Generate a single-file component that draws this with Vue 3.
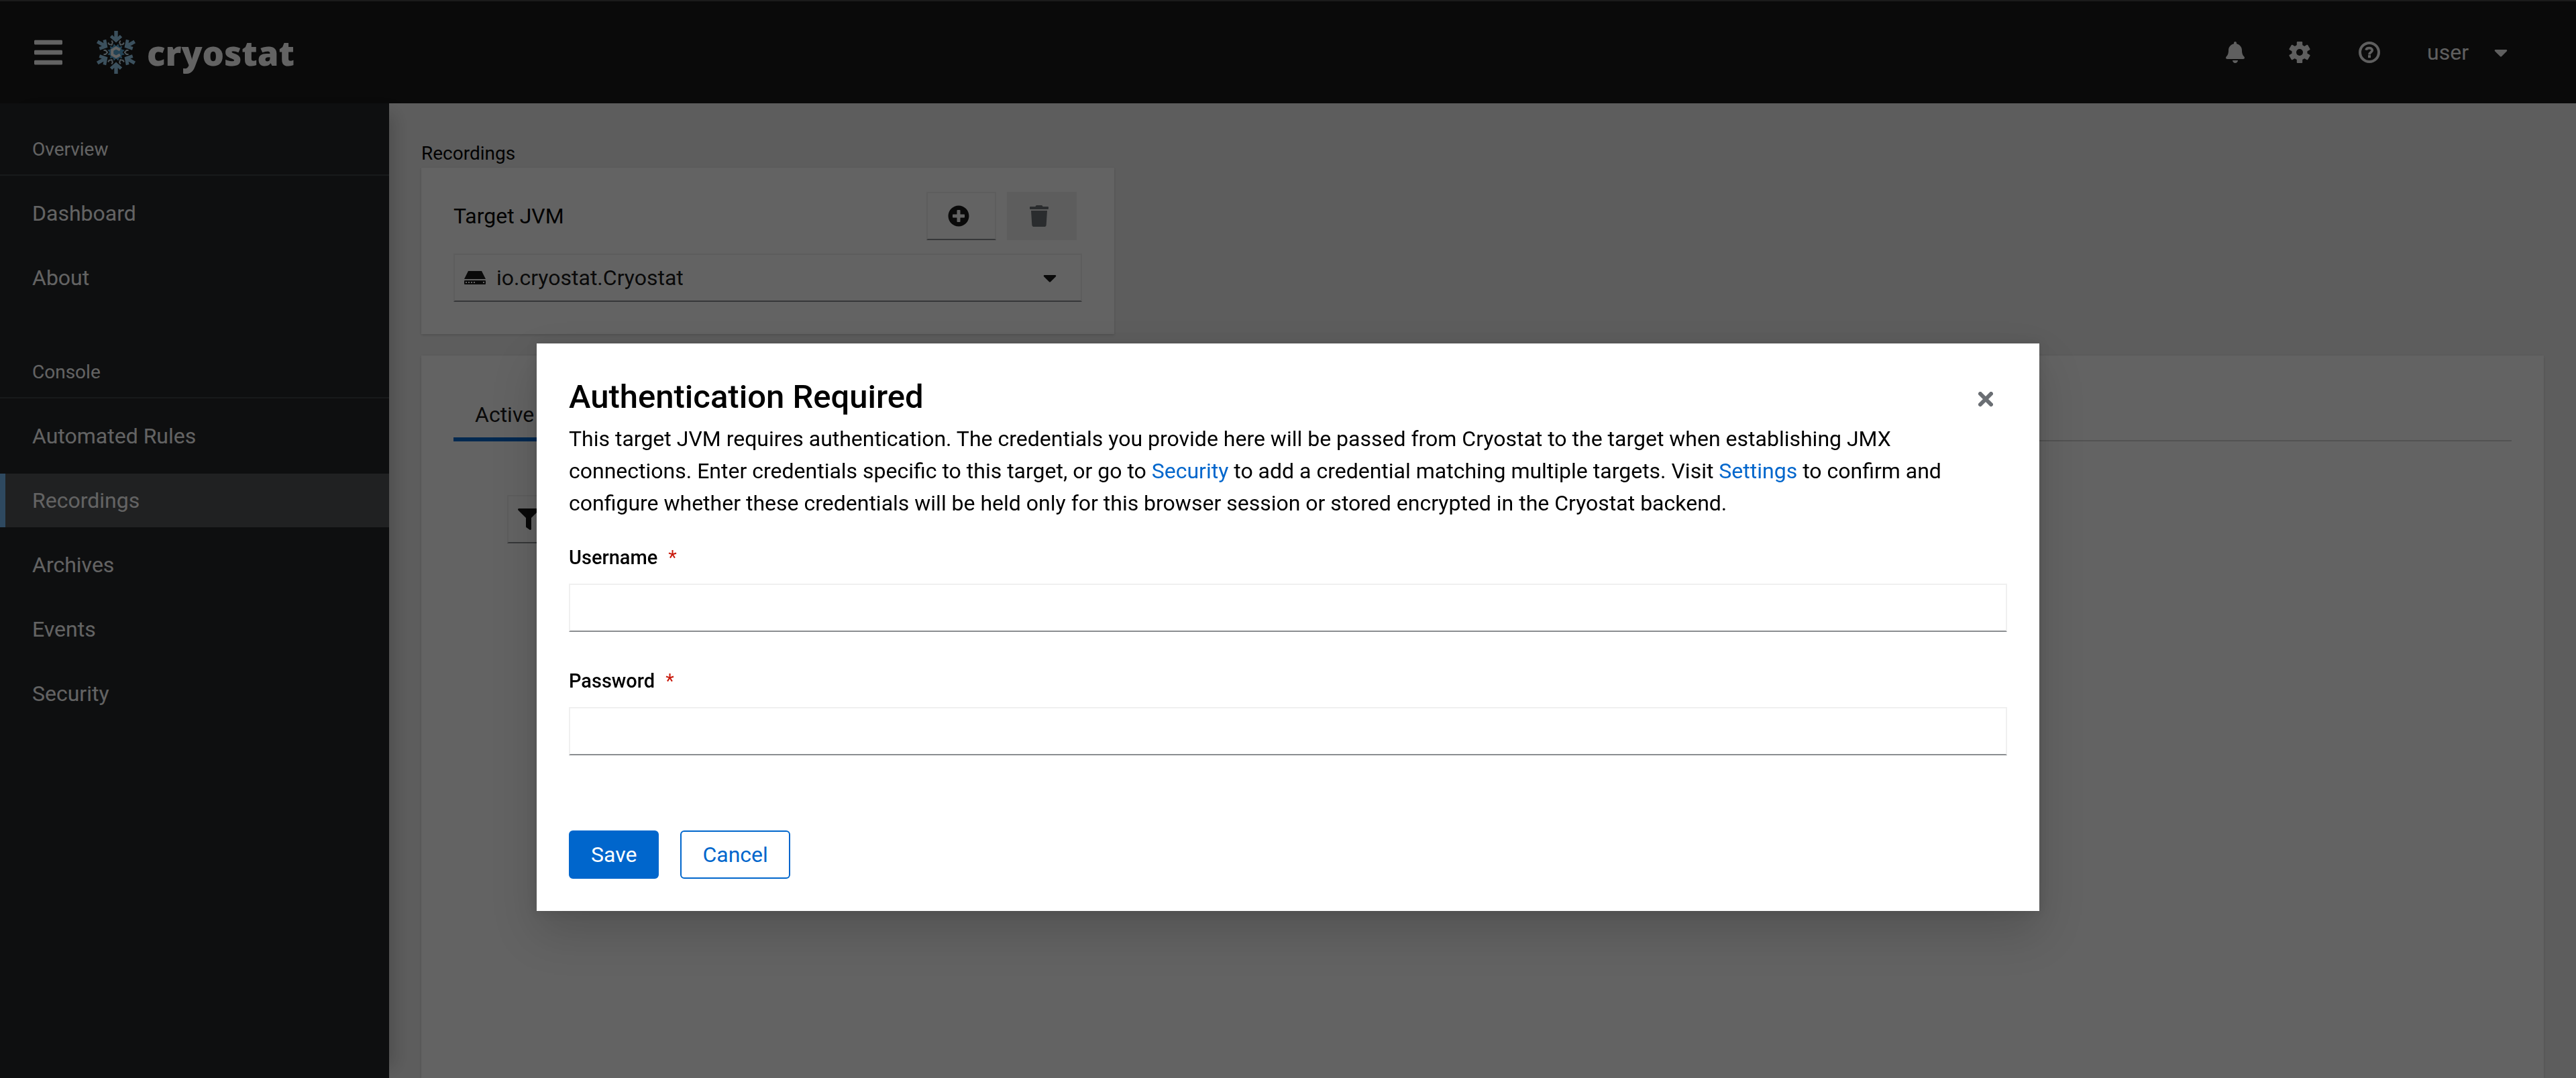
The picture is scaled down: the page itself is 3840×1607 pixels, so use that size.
<script setup>
import { ref } from 'vue'

const sections = [
  { title: 'Overview', links: ['Dashboard', 'About'] },
  { title: 'Console', links: ['Automated Rules', 'Recordings', 'Archives', 'Events', 'Security'] }
]
const current = 'Recordings'
const angles = [0, 60, 120, 180, 240, 300]
const target = ref('io.cryostat.Cryostat')
const username = ref('')
const password = ref('')

// Twelve-pointed star at the centre of the snowflake.
const star = Array.from({ length: 24 }, (_, i) => {
  const r = i % 2 ? 10 : 14
  const a = (Math.PI / 12) * i + Math.PI / 12
  return `${(r * Math.sin(a)).toFixed(2)},${(-r * Math.cos(a)).toFixed(2)}`
}).join(' ')
</script>

<template>
  <div class="page">
    <header class="masthead">
      <button class="plain toggle" type="button" aria-label="Global navigation">
        <svg width="42" height="48" viewBox="0 0 448 512" fill="currentColor" aria-hidden="true">
          <path d="M16 132h416c8.837 0 16-7.163 16-16V76c0-8.837-7.163-16-16-16H16C7.163 60 0 67.163 0 76v40c0 8.837 7.163 16 16 16zm0 160h416c8.837 0 16-7.163 16-16v-40c0-8.837-7.163-16-16-16H16c-8.837 0-16 7.163-16 16v40c0 8.837 7.163 16 16 16zm0 160h416c8.837 0 16-7.163 16-16v-40c0-8.837-7.163-16-16-16H16c-8.837 0-16 7.163-16 16v40c0 8.837 7.163 16 16 16z" />
        </svg>
      </button>
      <a class="brand" href="#">
        <svg width="64" height="64" viewBox="-32 -32 64 64" aria-hidden="true">
          <g v-for="a in angles" :key="a" :transform="`rotate(${a})`">
            <path fill="#97cdee" d="M-2.7-32h5.4v9l3.2-3 3.3 3.600L0-14.500-9.200-22.400l3.300-3.600 3.200 3z" />
            <path transform="rotate(30)" fill="none" stroke="#c5dce9" stroke-width="2" d="M-3-18.500v3L0-12.800l3-2.700v-3" />
          </g>
          <polygon :points="star" fill="#58a9d8" stroke="#151515" stroke-width="1" />
          <path fill="none" stroke="#fff" stroke-width="4" d="M6-3.500 0-6.800-5.800-3.400v6.800L0 6.800 6 3.500" />
        </svg>
        <span class="wordmark">cryostat</span>
      </a>
      <div class="tools">
        <div class="tool-group">
          <button class="plain tool" type="button" aria-label="Notifications">
            <svg width="28" height="32" viewBox="0 0 448 512" fill="currentColor" aria-hidden="true">
              <path d="M224 512c35.320 0 63.970-28.650 63.970-64H160.030c0 35.350 28.650 64 63.970 64zm215.390-149.710c-19.320-20.760-55.470-51.990-55.470-154.290 0-77.700-54.480-139.900-127.940-155.160V32c0-17.670-14.320-32-31.980-32s-31.980 14.330-31.980 32v20.840C118.560 68.100 64.080 130.300 64.080 208c0 102.300-36.150 133.530-55.470 154.290-6 6.450-8.660 14.160-8.610 21.710.11 16.400 12.980 32 32.100 32h383.800c19.120 0 32-15.600 32.100-32 .05-7.550-2.610-15.270-8.610-21.710z" />
            </svg>
          </button>
          <button class="plain tool" type="button" aria-label="Settings">
            <svg width="32" height="32" viewBox="-16 -16 32 32" aria-hidden="true">
              <g fill="currentColor">
                <circle r="11.500" />
                <rect v-for="a in [0, 60, 120]" :key="a" x="-4.200" y="-16" width="8.400" height="32" rx="1" :transform="`rotate(${a})`" />
              </g>
              <circle r="5" fill="#151515" />
            </svg>
          </button>
        </div>
        <button class="plain tool" type="button" aria-label="Help">
          <svg width="32" height="32" viewBox="-16 -16 32 32" fill="none" stroke="currentColor" stroke-width="4" aria-hidden="true">
            <circle r="14" />
            <path stroke-width="3.600" d="M-5-3.400C-4.200-7.300 4.300-7.600 4.300-3 4.300 0 0-.5 0 3.600" />
            <path d="M-2 6.200h4" />
          </svg>
        </button>
        <button class="plain user" type="button">
          <span>user</span>
          <svg width="20" height="32" viewBox="0 0 320 512" fill="currentColor" aria-hidden="true">
            <path d="M31.300 192h257.300c17.800 0 26.700 21.500 14.100 34.100L174.100 354.800c-7.800 7.800-20.500 7.800-28.300 0L17.200 226.100C4.600 213.500 13.500 192 31.300 192z" />
          </svg>
        </button>
      </div>
    </header>

    <div class="body">
      <nav class="sidebar" aria-label="Global">
        <section v-for="s in sections" :key="s.title" class="nav-section">
          <h2>{{ s.title }}</h2>
          <ul>
            <li v-for="l in s.links" :key="l">
              <a href="#" :class="{ current: l === current }">{{ l }}</a>
            </li>
          </ul>
        </section>
      </nav>

      <main class="main">
        <h1 class="crumb">Recordings</h1>
        <div class="grid">
          <section class="card target">
            <div class="target-head">
              <label for="target">Target JVM</label>
              <div class="actions">
                <button class="control" type="button" aria-label="Create target">
                  <svg width="32" height="32" viewBox="0 0 512 512" fill="currentColor" aria-hidden="true">
                    <path d="M256 8C119 8 8 119 8 256s111 248 248 248 248-111 248-248S393 8 256 8zm144 276c0 6.600-5.400 12-12 12h-92v92c0 6.600-5.400 12-12 12h-56c-6.600 0-12-5.400-12-12v-92h-92c-6.600 0-12-5.400-12-12v-56c0-6.600 5.400-12 12-12h92v-92c0-6.600 5.400-12 12-12h56c6.600 0 12 5.400 12 12v92h92c6.600 0 12 5.400 12 12v56z" />
                  </svg>
                </button>
                <button class="control" type="button" aria-label="Delete target" disabled>
                  <svg width="32" height="32" viewBox="0 0 448 512" fill="currentColor" aria-hidden="true">
                    <path d="M432 32H312l-9.400-18.700A24 24 0 0 0 281.100 0H166.800a23.720 23.720 0 0 0-21.400 13.300L136 32H16A16 16 0 0 0 0 48v32a16 16 0 0 0 16 16h416a16 16 0 0 0 16-16V48a16 16 0 0 0-16-16zM32 128l21.200 339a48 48 0 0 0 47.900 45h245.800a48 48 0 0 0 47.900-45L416 128z" />
                  </svg>
                </button>
              </div>
            </div>
            <div class="select">
              <svg width="32" height="32" viewBox="0 0 32 32" aria-hidden="true">
                <path fill="currentColor" d="M6 6h20l6 12H0zM1 20h30q1 0 1 1v4q0 1-1 1H1q-1 0-1-1v-4q0-1 1-1z" />
                <path fill="#fff" d="M2 22h2v2H2zM6 22h2v2H6zM10 22h2v2h-2zM14 22h2v2h-2zM28 22h2v2h-2z" />
              </svg>
              <select id="target" v-model="target">
                <option>io.cryostat.Cryostat</option>
              </select>
              <svg width="20" height="32" viewBox="0 0 320 512" fill="currentColor" aria-hidden="true">
                <path d="M31.300 192h257.300c17.800 0 26.700 21.500 14.100 34.100L174.100 354.800c-7.800 7.800-20.500 7.800-28.300 0L17.200 226.100C4.600 213.500 13.500 192 31.300 192z" />
              </svg>
            </div>
          </section>
        </div>
        <section class="card recordings">
          <div class="tabs" role="tablist">
            <button class="tab" type="button" role="tab" aria-selected="true">Active Recordings</button>
          </div>
          <div class="toolbar">
            <button class="filter" type="button" aria-label="Filter">
              <svg width="32" height="32" viewBox="0 0 512 512" fill="currentColor" aria-hidden="true">
                <path d="M487.976 0H24.028C2.710 0-8.047 25.866 7.058 40.971L192 225.941V432c0 7.831 3.821 15.170 10.237 19.662l80 55.980C298.020 518.690 320 507.493 320 487.980V225.941l184.947-184.970C520.021 25.896 509.338 0 487.976 0z" />
              </svg>
            </button>
          </div>
        </section>
      </main>
    </div>

    <div class="backdrop">
      <div class="modal" role="dialog" aria-modal="true" aria-labelledby="auth-title">
        <header class="modal-head">
          <h2 id="auth-title">Authentication Required</h2>
          <button class="plain close" type="button" aria-label="Close">
            <svg width="22" height="22" viewBox="0 0 22 22" stroke="currentColor" stroke-width="6" stroke-linecap="round" aria-hidden="true">
              <path d="M3 3l16 16M19 3L3 19" />
            </svg>
          </button>
        </header>
        <p class="message">
          This target JVM requires authentication. The credentials you provide here will be passed from Cryostat to the target when establishing JMX
          connections. Enter credentials specific to this target, or go to <a href="#">Security</a> to add a credential matching multiple targets. Visit <a href="#">Settings</a> to confirm and
          configure whether these credentials will be held only for this browser session or stored encrypted in the Cryostat backend.
        </p>
        <form class="form" @submit.prevent>
          <div class="field">
            <label for="username">Username<span class="required" aria-hidden="true">*</span></label>
            <input id="username" v-model="username" type="text" required />
          </div>
          <div class="field">
            <label for="password">Password<span class="required" aria-hidden="true">*</span></label>
            <input id="password" v-model="password" type="password" required />
          </div>
          <div class="buttons">
            <button class="btn primary" type="submit">Save</button>
            <button class="btn" type="button">Cancel</button>
          </div>
        </form>
      </div>
    </div>
  </div>
</template>

<style>
body {
  margin: 0;
}
</style>

<style scoped>
*,
*::before,
*::after {
  box-sizing: border-box;
}

.page {
  display: flex;
  flex-direction: column;
  min-height: 100vh;
  color: #000;
  background: #f0f0f0;
  font-family: Roboto, "Liberation Sans", sans-serif;
  font-size: 32px;
  line-height: 48px;
}

button,
input,
select {
  margin: 0;
  font: inherit;
  color: inherit;
}

a {
  text-decoration: none;
}

svg {
  display: block;
  flex: none;
}

.plain {
  display: flex;
  align-items: center;
  justify-content: center;
  padding: 0;
  border: 0;
  background: none;
}

/* Masthead */
.masthead {
  display: flex;
  align-items: center;
  height: 154px;
  padding: 0 70px 0 51px;
  border-top: 2px solid #424242;
  color: #fff;
  background: #151515;
}

.brand {
  display: flex;
  align-items: center;
  gap: 14px;
  margin-left: 48px;
  color: #fff;
}

.wordmark {
  font-family: "Noto Sans", "Open Sans", sans-serif;
  font-size: 51px;
  font-weight: 900;
  line-height: 64px;
}

.tools {
  display: flex;
  align-items: center;
  gap: 8px;
  margin-left: auto;
}

.tool-group {
  display: flex;
}

.tool {
  width: 96px;
  height: 72px;
  color: #f5f5f5;
}

.user {
  gap: 38px;
  height: 72px;
  padding: 0 32px 0 30px;
  color: #f5f5f5;
}

/* Sidebar */
.body {
  display: flex;
  flex: 1;
}

.sidebar {
  z-index: 1;
  flex: none;
  width: 580px;
  padding-top: 48px;
  color: #fff;
  background: #212427;
  box-shadow: 24px 0 24px -16px rgba(3, 3, 3, 0.18);
}

.nav-section + .nav-section {
  margin-top: 80px;
}

.nav-section h2 {
  margin: 0;
  padding: 0 48px 16px;
  border-bottom: 2px solid #3c3f42;
  font-size: 28px;
  font-weight: 400;
  line-height: 42px;
}

.nav-section ul {
  display: flex;
  flex-direction: column;
  gap: 16px;
  margin: 0;
  padding: 16px 0 0;
  list-style: none;
}

.nav-section a {
  display: block;
  padding: 16px 48px;
  color: #fff;
}

.nav-section a.current {
  background: #4f5255;
  box-shadow: inset 8px 0 #73bcf7;
}

/* Main area */
.main {
  display: flex;
  flex: 1;
  flex-direction: column;
  min-width: 0;
  padding: 54px 48px 0;
}

.crumb {
  margin: 0;
  font-size: 28px;
  font-weight: 400;
  line-height: 42px;
}

.grid {
  display: grid;
  grid-template-columns: repeat(3, 1fr);
  gap: 32px;
  margin-bottom: 32px;
}

.card {
  background: #fff;
  box-shadow: 0 2px 4px rgba(3, 3, 3, 0.12), 0 0 4px rgba(3, 3, 3, 0.06);
}

.target {
  padding: 36px 48px 48px;
}

.target-head {
  display: flex;
  align-items: center;
  justify-content: space-between;
  margin-bottom: 20px;
}

.actions {
  display: flex;
  gap: 16px;
  margin-right: 8px;
}

.control,
.filter,
.select,
.field input {
  height: 72px;
  border: 2px solid #f0f0f0;
  border-bottom-color: #8a8d90;
  border-radius: 0;
  color: #151515;
  background: #fff;
}

.control {
  width: 104px;
  padding: 0 38px 0 30px;
}

.control:disabled {
  border-color: #f0f0f0;
  color: #6a6e73;
  background: #f0f0f0;
}

.select {
  display: flex;
  align-items: center;
  gap: 16px;
  padding: 0 36px 0 14px;
}

.select select {
  flex: 1;
  min-width: 0;
  height: 68px;
  padding: 0;
  border: 0;
  background: none;
  appearance: none;
}

.recordings {
  flex: 1;
  padding: 48px;
}

.tabs {
  display: flex;
  box-shadow: inset 0 -2px #d2d2d2;
}

.tab {
  padding: 16px 32px;
  border: 0;
  color: #151515;
  background: none;
  box-shadow: inset 0 -6px #06c;
}

.toolbar {
  padding: 80px 80px 0;
}

.filter {
  padding: 0 14px;
}

/* Modal */
.backdrop {
  position: fixed;
  inset: 0;
  z-index: 2;
  display: flex;
  align-items: flex-start;
  justify-content: center;
  padding-top: 512px;
  background: rgba(3, 3, 3, 0.62);
}

.modal {
  width: 100%;
  max-width: 2240px;
  padding: 48px;
  background: #fff;
  box-shadow: 0 32px 64px rgba(3, 3, 3, 0.16), 0 0 16px rgba(3, 3, 3, 0.1);
}

.modal-head {
  display: flex;
  align-items: flex-start;
  justify-content: space-between;
}

.modal-head h2 {
  margin: 0;
  font-size: 49px;
  font-weight: 500;
  line-height: 64px;
}

.close {
  width: 64px;
  height: 70px;
  color: #6a6e73;
}

.message {
  margin: 0 0 36px;
}

.message a {
  color: #06c;
}

.field {
  display: flex;
  flex-direction: column;
  gap: 18px;
  margin-bottom: 52px;
}

.field label {
  height: 42px;
  font-size: 29px;
  font-weight: 500;
  line-height: 42px;
}

.field input {
  width: 100%;
  padding: 0 16px;
}

.required {
  margin-left: 16px;
  color: #c9190b;
  font-weight: 400;
}

.buttons {
  display: flex;
  gap: 32px;
  padding-top: 60px;
}

.btn {
  height: 72px;
  padding: 0 31px;
  border: 2px solid #06c;
  border-radius: 6px;
  color: #06c;
  background: #fff;
}

.btn.primary {
  color: #fff;
  background: #06c;
}
</style>
